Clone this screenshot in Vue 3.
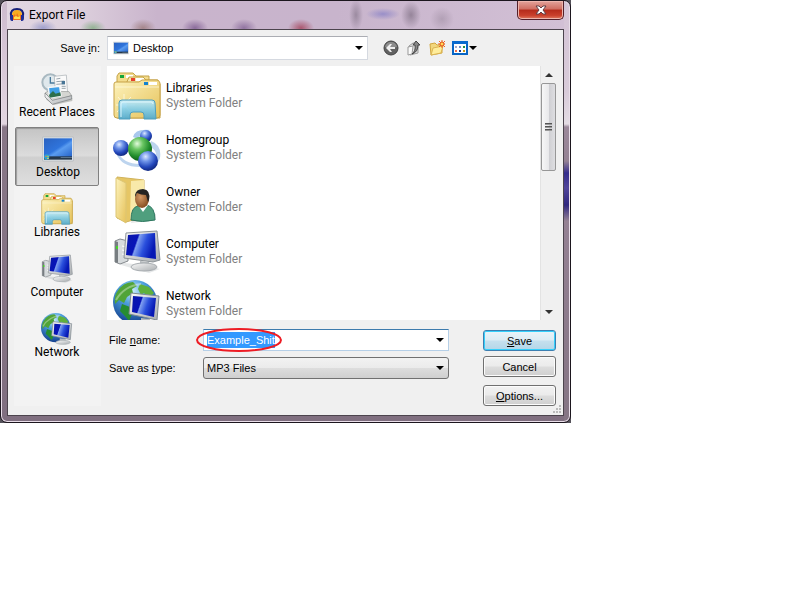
<script setup>
import { onMounted, ref } from 'vue'

const places = [
    { name: 'Recent Places', icon: 'recent' },
    { name: 'Desktop', icon: 'desktop' },
    { name: 'Libraries', icon: 'libraries' },
    { name: 'Computer', icon: 'computer' },
    { name: 'Network', icon: 'network' }
]

const entries = [
    { name: 'Libraries', icon: 'libraries' },
    { name: 'Homegroup', icon: 'homegroup' },
    { name: 'Owner', icon: 'owner' },
    { name: 'Computer', icon: 'computer' },
    { name: 'Network', icon: 'network' }
]

const currentPlace = ref('Desktop')
const fileName = ref('Example_Shit')
const fileInput = ref(null)

onMounted(() => {
    fileInput.value.focus()
    fileInput.value.select()
})
</script>

<template>
    <!-- shared icon shapes -->
    <svg class="defs" width="0" height="0" aria-hidden="true">
        <defs>
            <linearGradient id="folder" x1="0" y1="0" x2="1" y2="1">
                <stop offset="0" stop-color="#fdf3bd" />
                <stop offset="1" stop-color="#e6c25a" />
            </linearGradient>
            <linearGradient id="glass" x1="0" y1="0" x2="0" y2="1">
                <stop offset="0" stop-color="#c4ecf8" />
                <stop offset="0.5" stop-color="#7ccbea" />
                <stop offset="1" stop-color="#4da9d2" />
            </linearGradient>
            <linearGradient id="screen" x1="0" y1="0" x2="1" y2="0.3">
                <stop offset="0" stop-color="#0a18a8" />
                <stop offset="0.4" stop-color="#0713b8" />
                <stop offset="0.45" stop-color="#7f9ff0" />
                <stop offset="0.7" stop-color="#2a4fdc" />
                <stop offset="1" stop-color="#0618b4" />
            </linearGradient>
            <linearGradient id="wall" x1="0" y1="0" x2="1" y2="1">
                <stop offset="0" stop-color="#2a62c0" />
                <stop offset="0.5" stop-color="#2f74dc" />
                <stop offset="0.6" stop-color="#5a9cf0" />
                <stop offset="1" stop-color="#2361c8" />
            </linearGradient>
            <linearGradient id="metal" x1="0" y1="0" x2="1" y2="1">
                <stop offset="0" stop-color="#fafafa" />
                <stop offset="1" stop-color="#a9adb0" />
            </linearGradient>
            <radialGradient id="blueBall" cx="0.38" cy="0.28" r="0.7">
                <stop offset="0" stop-color="#dbe8ff" />
                <stop offset="0.35" stop-color="#6f94e8" />
                <stop offset="0.75" stop-color="#2347bb" />
                <stop offset="1" stop-color="#132c88" />
            </radialGradient>
            <radialGradient id="greenBall" cx="0.38" cy="0.28" r="0.7">
                <stop offset="0" stop-color="#e2fbdc" />
                <stop offset="0.35" stop-color="#69c562" />
                <stop offset="0.75" stop-color="#218c2c" />
                <stop offset="1" stop-color="#0f6019" />
            </radialGradient>
            <radialGradient id="sea" cx="0.45" cy="0.25" r="0.75">
                <stop offset="0" stop-color="#c9ecfb" />
                <stop offset="0.4" stop-color="#4d9fdc" />
                <stop offset="1" stop-color="#123f8e" />
            </radialGradient>
            <radialGradient id="skin" cx="0.4" cy="0.4" r="0.6">
                <stop offset="0" stop-color="#d49a66" />
                <stop offset="1" stop-color="#885024" />
            </radialGradient>

            <symbol id="recent" viewBox="0 0 48 48">
                <path d="M8 36 L40 32 L47 38 L47 42 L19 48 L8 40z" fill="#a0a29c" opacity="0.6" />
                <circle cx="14" cy="14" r="12" fill="#dfe8ec" stroke="#a9b9c1" stroke-width="3" />
                <path d="M14 6 V15 H21" fill="none" stroke="#49799a" stroke-width="2" />
                <path d="M20 5 L38 3 L40 31 L22 34z" fill="#fafafa" stroke="#a5acb0" />
                <path d="M23 9 L29 8 M23 13 L35 12 M23 17 L36 16 M31 20 L37 20 M31 23 L37 23" stroke="#99a5ad" stroke-width="1.5" />
                <path d="M31 12 L36 12 L36 17 L31 17z" fill="#477596" />
                <path d="M6 30 L11 27 L42 28 L46 34 L17 42z" fill="#d5d6d2" stroke="#929693" />
                <path d="M11 22 L28 20 L30 34 L13 37z" fill="#3f9fe6" stroke="#f5f8fa" stroke-width="2" />
                <path d="M12 33 L18 27 L22 31 L29 29 L30 34 L13 37z" fill="#2c6f4b" />
                <path d="M6 30 L17 41 L46 34 L46 39 L17 47 L6 36z" fill="url(#metal)" stroke="#777b7e" />
            </symbol>

            <symbol id="desktop" viewBox="0 0 48 48">
                <path d="M1 6 H47 V42 H1z" fill="#e0e6eb" stroke="#b0b5ba" />
                <path d="M3 8 H45 V36 H3z" fill="url(#wall)" />
                <path d="M3 35 H45 V40 H3z" fill="#26384b" />
                <path d="M28 36 H45 V37 H28z" fill="#7792a8" />
                <circle cx="7" cy="36" r="4" fill="#2aa3d3" />
                <path d="M5 34 h2 v2 h-2z" fill="#f7793b" />
                <path d="M8 34 h2 v2 h-2z" fill="#b1df4c" />
                <path d="M8 37 h2 v2 h-2z" fill="#ffe14b" />
            </symbol>

            <symbol id="libraries" viewBox="0 0 48 48">
                <path d="M4 46 V4 L6 1 H20 L23 4 H36 V12 H47 V46z" fill="#f3dc8c" stroke="#c5a349" />
                <path d="M7 3 h4 v3 h-4z" fill="#18a63a" />
                <path d="M13 3 h7 v3 h-7z" fill="#fff" />
                <path d="M13 12 L16 5 H30 L33 8 H45 V12z" fill="#f7e8a9" stroke="#c5a349" />
                <path d="M18 6 h4 v3 h-4z" fill="#e7412c" />
                <path d="M23 6 h8 v3 h-8z" fill="#fff" />
                <path d="M1 12 Q1 10 3 10 H26 L29 8 H44 Q46 8 47 11 V43 Q47 46 44 46 H4 Q1 46 1 43z" fill="url(#folder)" stroke="#c6a146" />
                <path d="M31 10 h4 v3 h-4z" fill="#1482cf" />
                <path d="M36 10 h8 v3 h-8z" fill="#fff" />
                <path d="M2 15 H46" stroke="#fffbe1" opacity="0.7" />
                <path d="M11 22 V46 M3 33 H22 M5 25 L18 41 M18 25 L4 40" stroke="#fffdf0" opacity="0.7" />
                <circle cx="11" cy="33" r="3" fill="#fffef5" opacity="0.9" />
                <path d="M6 47 V31 Q6 28 9 28 H39 Q42 28 42 31 L43 47 H31 V43 Q31 40 28 40 H20 Q17 40 17 43 V47z" fill="url(#glass)" stroke="#4e9fbf" fill-opacity="0.9" />
                <path d="M8 45 V32 Q8 30 10 30 H38 Q40 30 40 32" fill="none" stroke="#dcf6ff" />
            </symbol>

            <symbol id="homegroup" viewBox="0 0 48 48">
                <path d="M20 13 Q22 4 38 6 Q29 7 25 15z" fill="#a9c8ed" />
                <path d="M38 17 Q49 21 47 34 Q45 40 43 37 Q45 26 37 23z" fill="#bdd4ee" />
                <path d="M5 28 Q10 40 27 40 L27 43 Q8 43 3 29z" fill="#bdd4ee" />
                <circle cx="33" cy="12" r="6" fill="url(#blueBall)" />
                <circle cx="8" cy="24" r="8" fill="url(#blueBall)" />
                <circle cx="27" cy="25" r="12" fill="url(#greenBall)" />
                <circle cx="35" cy="37" r="10" fill="url(#blueBall)" />
            </symbol>

            <symbol id="owner" viewBox="0 0 48 48">
                <path d="M20 38 L43 38 L43 44 L18 47z" fill="#888" opacity="0.2" />
                <path d="M4 1 L31 4 V41 L13 46 L4 42z" fill="#e6c665" stroke="#d1b35b" />
                <path d="M18 5 L31 4 V41 L17 43z" fill="#f8e9a9" />
                <path d="M3 2 L13 7 V47 L3 41z" fill="url(#folder)" stroke="#dcc574" />
                <path d="M18 44 Q18 31 25 30 L34 29 Q42 31 42 44 Q29 47 18 44z" fill="#4f9f7e" stroke="#2e7760" />
                <path d="M25 29 L30 36 L35 29z" fill="#fff" />
                <ellipse cx="29" cy="23" rx="7" ry="9" fill="url(#skin)" />
                <path d="M22 19 Q23 13 30 13 Q38 14 36 24 L35 26 L33 19 Q28 19 24 17 L22 21z" fill="#242423" />
            </symbol>

            <symbol id="computer" viewBox="0 0 48 48">
                <path d="M5 34 L35 38 L47 41 L36 45 L8 37z" fill="#848b91" opacity="0.2" />
                <path d="M2 13 L7 11 L15 13 V33 L7 36 L2 34z" fill="#d6dadc" stroke="#858a8e" />
                <path d="M2 13 L5 14 V35 L2 34z" fill="#777d81" />
                <path d="M3 18 h2 v3 h-2z" fill="#45d426" />
                <path d="M9 18 L14 19 M9 22 L14 23 M9 26 L14 27" stroke="#fff" />
                <path d="M13 5 L44 3 L47 32 L40 34 L11 30z" fill="url(#metal)" stroke="#8c9398" />
                <path d="M15 7 L42 5 L43 31 L13 27z" fill="url(#screen)" />
                <path d="M27 33 L36 34 L37 38 L27 38z" fill="#b6bbbe" />
                <ellipse cx="31" cy="39" rx="13" ry="4" fill="url(#metal)" stroke="#a8adb1" />
            </symbol>

            <symbol id="network" viewBox="0 0 48 48">
                <circle cx="22" cy="22" r="22" fill="url(#sea)" />
                <path d="M4 12 Q10 2 20 2 L24 6 L19 9 L20 13 L14 17 L11 23 L6 20 L2 24 Q1 16 4 12z" fill="#50a438" />
                <path d="M27 4 L36 7 L41 13 L36 18 L31 13 L28 15 L25 9z" fill="#5fb03d" />
                <path d="M9 24 L17 27 L20 32 L16 41 L12 36 L7 31z" fill="#268d31" />
                <path d="M3 20 Q11 6 28 4" fill="none" stroke="#fff" opacity="0.35" stroke-width="2" />
                <path d="M18 13 L46 16 L44 40 L16 34z" fill="url(#metal)" stroke="#7e8a91" />
                <path d="M20 16 L43 18 L41 37 L19 32z" fill="url(#screen)" />
                <path d="M28 38 L37 39 L38 43 L28 43z" fill="#b6bbbe" />
                <ellipse cx="33" cy="44" rx="11" ry="3" fill="url(#metal)" stroke="#a8adb1" />
            </symbol>
        </defs>
    </svg>

    <main class="backdrop">
        <section class="dialog" aria-labelledby="title">
            <header class="titlebar">
                <svg class="logo" viewBox="0 0 16 16" aria-hidden="true">
                    <path d="M3 8 Q3 3 8 3 T13 8 V13 H3z" fill="#f8ac20" />
                    <path d="M4 9 L6 7 L7 10 L8 6 L10 10 L12 7 V13 H4z" fill="#f0701f" />
                    <path d="M5 10 L7 9 L9 10 L11 9 V12 H5z" fill="#ffe14f" />
                    <path d="M2 9 Q1 2 8 2 T14 9" fill="none" stroke="#171f78" stroke-width="2" />
                    <path d="M1 8 H4 V14 H3 Q1 14 1 11z M12 8 H15 V11 Q15 14 13 14 H12z" fill="#202e96" />
                </svg>
                <h1 id="title">Export File</h1>
                <button class="close" type="button" aria-label="Close">
                    <svg viewBox="0 0 12 10" aria-hidden="true">
                        <path d="M1 1 H4 L6 3 L8 1 H11 L8 5 L11 9 H8 L6 7 L4 9 H1 L4 5z" fill="#fff" stroke="#614047" />
                    </svg>
                </button>
            </header>

            <form class="body" @submit.prevent>
                <label class="look-label" for="lookin">Save <u>i</u>n:</label>
                <div class="look">
                    <div class="combo location">
                        <svg class="small-icon" aria-hidden="true"><use href="#desktop" /></svg>
                        <select id="lookin"><option>Desktop</option></select>
                        <span class="arrow"></span>
                    </div>
                    <div class="tools">
                        <button type="button" aria-label="Back">
                            <svg viewBox="0 0 16 16">
                                <circle cx="8" cy="8" r="7" fill="#626262" stroke="#444" />
                                <path d="M2 7 Q3 2 8 2 T14 7 Q8 9 2 7z" fill="#aaa" opacity="0.6" />
                                <path d="M3 8 L7 4 H9 L7 7 H12 V9 H7 L9 12 H7z" fill="#eee" />
                            </svg>
                        </button>
                        <button type="button" aria-label="Up one level">
                            <svg viewBox="0 0 16 16">
                                <path d="M3 6 L7 3 L12 4 V13 L4 15z" fill="#e2e2e2" stroke="#999" />
                                <path d="M2 7 L7 6 L6 14 L2 15z" fill="#fafafa" stroke="#999" />
                                <path d="M6 14 Q10 11 9 5 L7 5 L10 1 L14 5 L12 5 Q12 12 6 14z" fill="#888" stroke="#444" />
                            </svg>
                        </button>
                        <button type="button" aria-label="New folder">
                            <svg viewBox="0 0 16 16">
                                <path d="M1 4 L6 3 L8 5 H13 V13 L2 15z" fill="#f2d67c" stroke="#d3a63d" />
                                <path d="M4 8 L14 6 L12 13 L2 15z" fill="#ffed9b" stroke="#dbb453" />
                                <path d="M13 0 V8 M9 4 H16 M10 1 L16 7 M16 1 L10 7" stroke="#ee6a20" />
                                <circle cx="13" cy="4" r="2" fill="#ffda55" stroke="#e35320" />
                            </svg>
                        </button>
                        <button class="views" type="button" aria-label="View menu">
                            <svg viewBox="0 0 16 16">
                                <path d="M1 2 H15 V14 H1z" fill="#fff" stroke="#0865c5" stroke-width="2" />
                                <path d="M0 1 H16 V4 H0z" fill="#0b6bce" />
                                <path d="M3 6 h2 v2 h-2z" fill="#aaa9c5" />
                                <path d="M7 6 h2 v2 h-2z" fill="#6b8ccb" />
                                <path d="M11 6 h2 v2 h-2z" fill="#26903f" />
                                <path d="M3 10 h2 v2 h-2z" fill="#f07046" />
                                <path d="M7 10 h2 v2 h-2z" fill="#183b92" />
                                <path d="M11 10 h2 v2 h-2z" fill="#c99718" />
                            </svg>
                            <span class="arrow"></span>
                        </button>
                    </div>
                </div>

                <nav class="places" aria-label="Places">
                    <button
                        v-for="place in places"
                        :key="place.name"
                        type="button"
                        :class="{ selected: place.name === currentPlace }"
                        @click="currentPlace = place.name"
                    >
                        <svg aria-hidden="true"><use :href="'#' + place.icon" /></svg>
                        <span>{{ place.name }}</span>
                    </button>
                </nav>

                <div class="browser">
                    <ul class="files">
                        <li v-for="entry in entries" :key="entry.name">
                            <svg aria-hidden="true"><use :href="'#' + entry.icon" /></svg>
                            <div>
                                <p>{{ entry.name }}</p>
                                <p class="kind">System Folder</p>
                            </div>
                        </li>
                    </ul>
                    <div class="scrollbar">
                        <button type="button" aria-label="Scroll up"><span class="arrow up"></span></button>
                        <div class="thumb"><i></i><i></i><i></i></div>
                        <button class="down" type="button" aria-label="Scroll down"><span class="arrow"></span></button>
                    </div>
                </div>

                <div class="bottom">
                    <div class="fields">
                        <label for="filename">File <u>n</u>ame:</label>
                        <div class="combo name">
                            <input id="filename" ref="fileInput" v-model="fileName" type="text" autocomplete="off" spellcheck="false">
                            <button type="button" aria-label="Previous names"><span class="arrow"></span></button>
                            <svg class="ring" viewBox="0 0 88 26" aria-hidden="true">
                                <ellipse cx="44" cy="13" rx="42" ry="11" fill="none" stroke="#ed1c24" stroke-width="2" />
                            </svg>
                        </div>
                        <label for="filetype">Save as <u>t</u>ype:</label>
                        <div class="combo type">
                            <select id="filetype"><option>MP3 Files</option></select>
                            <span class="arrow"></span>
                        </div>
                    </div>
                    <div class="actions">
                        <button class="primary" type="submit"><u>S</u>ave</button>
                        <button type="button">Cancel</button>
                        <button class="options" type="button"><u>O</u>ptions...</button>
                    </div>
                </div>
                <svg class="grip" viewBox="0 0 9 9" aria-hidden="true">
                    <path d="M6 0h2v2h-2z M3 3h2v2h-2z M6 3h2v2h-2z M0 6h2v2h-2z M3 6h2v2h-2z M6 6h2v2h-2z" fill="#bbb" />
                </svg>
            </form>
        </section>
    </main>
</template>

<style>
body {
    margin: 0;
    background: #fff;
}
</style>

<style scoped>
* {
    box-sizing: border-box;
}
button,
input,
select {
    margin: 0;
    padding: 0;
    border: 0;
    background: none;
    color: #000;
    font: inherit;
    outline: none;
    appearance: none;
}
svg {
    display: block;
    flex: none;
}
.defs {
    position: absolute;
}
.backdrop {
    max-width: 571px;
    background: #55525a;
    font: 11px/16px "Liberation Sans", Arial, sans-serif;
    color: #000;
}

/* window frame */
.dialog {
    padding: 0 6px 6px;
    border: 1px solid #1c161e;
    border-radius: 7px;
    background:
        linear-gradient(#d5c4d6 0, #d8cbd9 90px, #e4dce4 123px, #9c899b 126px, #958294 160px, #352c8c 172px, #51459a 187px, #30277f 204px, #958294 220px, #857584 100%) right / 6px 100% no-repeat,
        linear-gradient(#cdbbce 0, #d9c9d8 70px, #e2d6e0 123px, #887787 126px, #806f80 100%);
    box-shadow: inset 0 0 0 1px #eadfea;
}
.titlebar {
    display: flex;
    align-items: center;
    height: 28px;
    padding-left: 2px;
    background:
        radial-gradient(ellipse 14px 8px at 36px 27px, #8288c3b0, transparent),
        radial-gradient(ellipse 13px 8px at 86px 27px, #73a873b0, transparent),
        radial-gradient(ellipse 13px 9px at 136px 27px, #8d6762a0, transparent),
        radial-gradient(ellipse 13px 9px at 188px 27px, #67417fa0, transparent),
        radial-gradient(ellipse 13px 9px at 237px 27px, #704d87a0, transparent),
        radial-gradient(ellipse 13px 9px at 294px 27px, #a13a52c0, transparent),
        radial-gradient(ellipse 7px 16px at 349px 14px, #796a7e90, transparent),
        radial-gradient(ellipse 17px 6px at 376px 13px, #7c77c5a0, transparent),
        radial-gradient(ellipse 10px 14px at 404px 14px, #6c5d7190, transparent),
        radial-gradient(ellipse 12px 12px at 435px 18px, #98879b80, transparent),
        linear-gradient(90deg, #e2d7e2 0, #ddd0dd 70px, #c9b4cc 150px, #c8b4cc 330px, #d2c0d5 100%);
}
.logo {
    width: 16px;
    height: 16px;
}
h1 {
    flex: 1;
    margin: 0 0 0 4px;
    font: 12px/16px Roboto, "Open Sans", sans-serif;
}
.close {
    display: flex;
    align-items: center;
    justify-content: center;
    align-self: flex-start;
    width: 47px;
    height: 19px;
    border: 1px solid #53202a;
    border-top: 0;
    border-radius: 0 0 5px 5px;
    background: linear-gradient(#e3a49c 0, #cf6d61 45%, #b52b1b 50%, #c9402c 80%, #e07b61 100%);
    box-shadow: inset 0 0 0 1px #eeb5ad;
}
.close svg {
    width: 12px;
    height: 10px;
}

.body {
    position: relative;
    display: grid;
    grid-template-columns: 87px minmax(0, 1fr);
    column-gap: 6px;
    padding: 0 7px 9px 6px;
    border: 1px solid #4c444d;
    background: #f0f0f0;
}
.look-label {
    align-self: center;
    justify-self: end;
    padding-right: 1px;
}
.look {
    display: flex;
    align-items: center;
    height: 36px;
}

/* drop-downs */
.combo {
    position: relative;
    display: flex;
    align-items: center;
    height: 22px;
    border: 1px solid #d5d9e0;
    background: #fff;
}
.combo select {
    flex: 1;
    align-self: stretch;
    min-width: 0;
}
.combo > .arrow {
    position: absolute;
    right: 4px;
    pointer-events: none;
}
.arrow {
    width: 0;
    height: 0;
    border: 4px solid transparent;
    border-top-color: #000;
    border-bottom: 0;
}
.location {
    flex: 0 1 261px;
    height: 24px;
    border-top-color: #abadb3;
}
.location .small-icon {
    width: 16px;
    height: 16px;
    margin: 0 4px 0 5px;
}
.tools {
    display: flex;
    align-items: center;
    gap: 7px;
    margin-left: 15px;
}
.tools svg {
    width: 16px;
    height: 16px;
}
.views {
    display: flex;
    align-items: center;
    gap: 1px;
}

.places {
    grid-row: 2 / 4;
    padding: 1px 2px 0 1px;
    background: #f3f3f3;
    font: 12px/14px Roboto, "Open Sans", sans-serif;
}
.places button {
    display: flex;
    flex-direction: column;
    align-items: center;
    width: 100%;
    height: 59px;
    margin-bottom: 1px;
    padding-top: 5px;
    border: 1px solid transparent;
}
.places button.selected {
    padding-left: 2px;
    border: 1px solid #808080;
    border-radius: 2px;
    background: linear-gradient(#c4c4c4, #dcdcdc 48%, #cfcfcf 52%, #dedede);
    box-shadow: inset 1px 1px 1px #999;
}
.places svg {
    width: 32px;
    height: 32px;
}

.browser {
    display: flex;
    height: 254px;
    background: #fff;
}
.files {
    flex: 1;
    margin: 0;
    padding: 4px 6px 0;
    overflow: hidden;
    list-style: none;
    font: 12px/15px Roboto, "Open Sans", sans-serif;
}
.files li {
    display: flex;
    align-items: center;
    gap: 5px;
    height: 52px;
}
.files svg {
    width: 48px;
    height: 48px;
}
.files p {
    margin: 0;
}
.kind {
    color: #808080;
}
.scrollbar {
    display: flex;
    flex-direction: column;
    width: 16px;
    border-left: 1px solid #e3e3e3;
    background: #f0f0f0;
}
.scrollbar button {
    display: flex;
    align-items: center;
    justify-content: center;
    height: 17px;
}
.scrollbar .arrow {
    border-top-color: #333;
}
.scrollbar .arrow.up {
    border-top: 0;
    border-bottom: 4px solid #333;
}
.scrollbar .down {
    margin-top: auto;
}
.thumb {
    display: flex;
    flex-direction: column;
    align-items: center;
    justify-content: center;
    gap: 1px;
    height: 88px;
    border: 1px solid #979797;
    border-radius: 2px;
    background: linear-gradient(90deg, #f7f7f7 0, #e9e9eb 50%, #cfcfd3 55%, #dedee1 100%);
}
.thumb i {
    width: 7px;
    height: 2px;
    border-bottom: 1px solid #999;
    background: #555;
}

.bottom {
    display: flex;
    justify-content: space-between;
    padding: 9px 0 0 2px;
}
.fields {
    display: grid;
    grid-template-columns: 94px minmax(0, 246px);
    gap: 6px 0;
    align-items: center;
    align-content: start;
}
.name {
    border-color: #b5cfe7;
    border-top-color: #3d7bad;
}
.name input {
    flex: 1;
    min-width: 0;
    height: 16px;
    padding-left: 3px;
}
.name input::selection {
    background: #3399ff;
    color: #fff;
}
.name button {
    display: flex;
    align-items: center;
    justify-content: center;
    align-self: stretch;
    width: 16px;
}
.ring {
    position: absolute;
    left: -9px;
    top: -3px;
    width: 88px;
    height: 26px;
    pointer-events: none;
}
.type {
    border-color: #707070;
    border-radius: 3px;
    background: linear-gradient(#f2f2f2 0, #ebebeb 48%, #dddddd 52%, #cfcfcf 100%);
}
.type select {
    padding-left: 3px;
}

.actions {
    display: flex;
    flex-direction: column;
    gap: 5px;
    width: 73px;
    padding-top: 1px;
}
.actions button {
    height: 21px;
    border: 1px solid #707070;
    border-radius: 3px;
    background: linear-gradient(#f2f2f2 0, #ebebeb 48%, #dddddd 52%, #cfcfcf 100%);
    box-shadow: inset 0 0 0 1px #fcfcfc;
}
.actions .primary {
    border-color: #3c7fb1;
    background: linear-gradient(#eaf4f9 0, #dcecf4 48%, #c5e0ee 52%, #b3d6e8 100%);
    box-shadow: inset 0 0 0 1px #35d0fb;
}
.actions .options {
    margin-top: 3px;
}

.grip {
    position: absolute;
    right: 1px;
    bottom: 1px;
    width: 9px;
    height: 9px;
}
</style>
